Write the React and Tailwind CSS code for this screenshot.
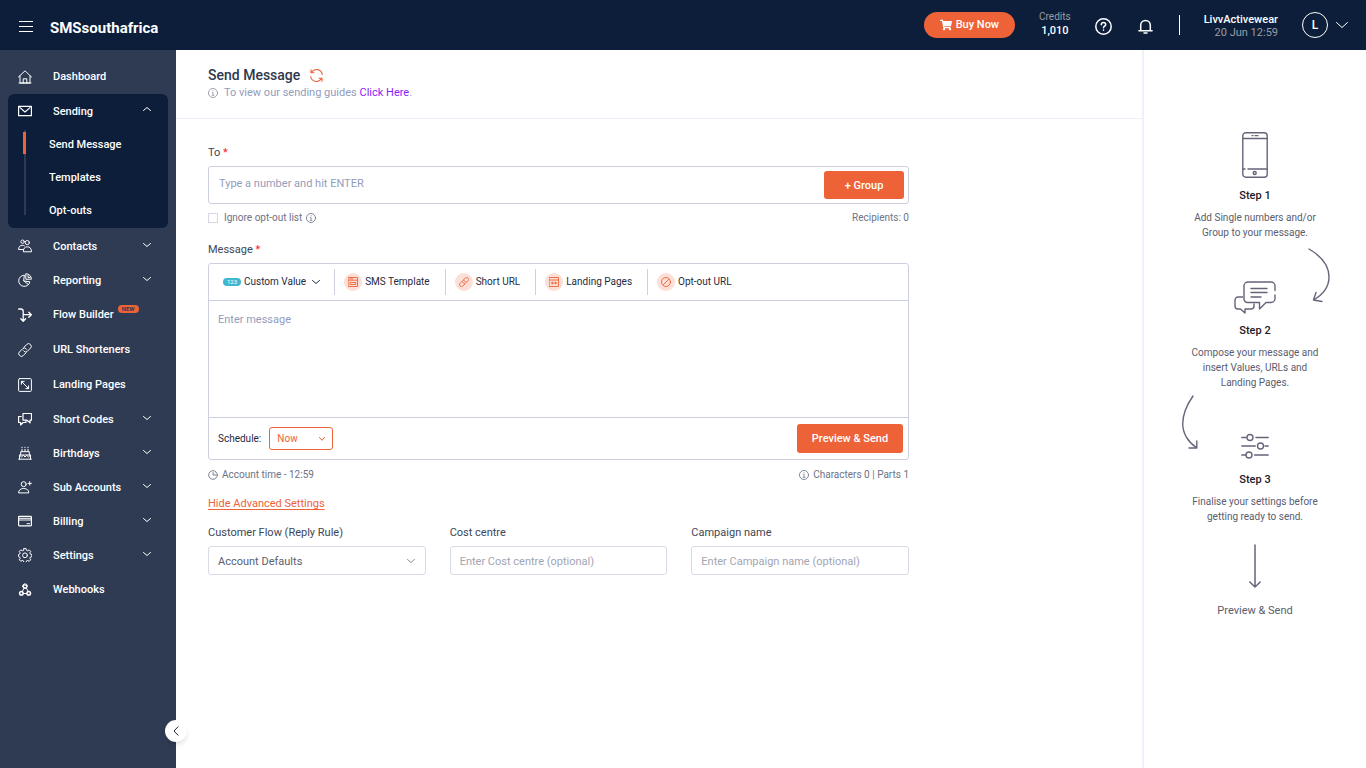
import React, { useState } from 'react';
import { FaShoppingCart } from 'react-icons/fa';

const Icon = ({ children, size = 'w-3.5 h-3.5', box = '0 0 14 14', stroke = 1 }) => (
  <svg
    className={`${size} shrink-0`}
    viewBox={box}
    fill="none"
    stroke="currentColor"
    strokeWidth={stroke}
    strokeLinecap="round"
    strokeLinejoin="round"
    aria-hidden="true"
  >
    {children}
  </svg>
);

const Chevron = ({ size = 'w-2 h-1', box = '0 0 8 4', d = 'M.5 .5 4 3.5 7.5 .5', stroke = 1 }) => (
  <Icon size={size} box={box} stroke={stroke}><path d={d} /></Icon>
);

const InfoIcon = () => (
  <Icon size="w-2.5 h-2.5" box="0 0 11 11" stroke={0.9}>
    <circle cx="5.5" cy="5.5" r="5" />
    <path d="M5.5 2.9v.3M4.7 5h.9v3M4.500 8h2.100" strokeWidth=".8" />
  </Icon>
);

const linkPaths = (
  <>
    <path d="M6 4.2 8.9 1.3a2.3 2.3 0 0 1 3.3 0l.4.4a2.3 2.3 0 0 1 0 3.3L9.3 8.3a2.3 2.3 0 0 1-3.3 0l-.5-.6" />
    <path d="M8 9.8l-2.9 2.9a2.3 2.3 0 0 1-3.3 0l-.4-.4a2.3 2.3 0 0 1 0-3.3l3.3-3.3a2.3 2.3 0 0 1 3.3 0l.5.6" />
  </>
);

const icons = {
  home: (
    <>
      <path d="M.5 7 7 .8 13.500 7M2 6v7h10V6M1 13h12" />
      <path d="M5.200 13V8.800h3.600V13" />
    </>
  ),
  mail: (
    <>
      <rect x=".6" y="2.300" width="12.800" height="9.400" strokeWidth="1.200" />
      <path d="M2 3.600 7 8l5-4.400" strokeWidth="1.200" />
    </>
  ),
  contacts: (
    <>
      <circle cx="4.600" cy="2.700" r="1.700" />
      <circle cx="9.300" cy="3.600" r="2.100" />
      <path d="M5.300 12.400c0-2.800 1.400-4.600 4-4.600s4.200 1.800 4.200 4.600zM5.300 10.500H.6c0-2.700 1.400-4.200 3.700-4.200.9 0 1.500.2 2.100.6" />
    </>
  ),
  chart: (
    <>
      <path d="M6 2.200a5.600 5.600 0 1 0 5.800 6.600L6 8z" />
      <path d="M8.200.7a5.300 5.300 0 0 1 5.200 5.500l-5.200.1zM6 8l4.500 3.600M10 2.500v2h2" />
    </>
  ),
  flow: (
    <path d="M.6 1h2.200c1.700 0 2.400.9 2.400 2.500v9.500M2.800 10.700l2.400 2.500 2.400-2.500M5.200 6.700h8M10.800 4.200l2.500 2.500-2.500 2.500" strokeWidth="1.300" />
  ),
  link: linkPaths,
  landing: (
    <>
      <rect x=".6" y=".6" width="12.800" height="12.800" rx="1" />
      <path d="M3.400 3.400l7.200 7.200M3.400 6.200V3.400h2.800M7.800 10.600h2.800V7.800" />
    </>
  ),
  codes: (
    <>
      <path d="M5 1.500h8.500v6.700H12v2.700L9 8.200H5z" strokeWidth="1.200" />
      <path d="M3.200 4.500H.6v6h2V13l2.500-2.500h2.800V8.600" strokeWidth="1.200" />
    </>
  ),
  cake: (
    <>
      <path d="M.6 13.200h12.800M1.500 13V9h11v4M2.700 9V5.700h8.600V9M4 5.500V3.300M7 5.500V3.300M10 5.500V3.300M4 1.200v.4M7 1.200v.4M10 1.200v.4" />
      <path d="M1.500 9.200l2 1.800L5.300 9.300 7 11l1.700-1.700 1.800 1.700 2-1.800" />
    </>
  ),
  userPlus: (
    <>
      <circle cx="5.700" cy="4.200" r="2.500" />
      <path d="M.6 12.500c0-2.400 2-4 5.100-4s5.100 1.600 5.100 4zM11.700 1.700v3.400M10 3.400h3.400" />
    </>
  ),
  card: (
    <>
      <rect x=".6" y="2.300" width="12.800" height="9.600" rx=".8" strokeWidth="1.200" />
      <path d="M.6 4.300h12.800M.6 6h12.800M9 9.700h2.600" />
    </>
  ),
  gear: (
    <>
      <path d="M5.900.6h2.200l.4 1.700 1.200.5 1.500-.9 1.500 1.500-.9 1.500.5 1.200 1.600.4v2.200l-1.600.4-.5 1.200.9 1.500-1.500 1.500-1.500-.9-1.200.5-.4 1.600H5.900l-.4-1.600-1.200-.5-1.500.9-1.500-1.500.9-1.500-.5-1.200L.6 8.700V6.500l1.100-.4.5-1.200-.9-1.500 1.500-1.500 1.500.9 1.200-.5z" />
      <circle cx="7" cy="7.300" r="2.400" />
    </>
  ),
  webhook: (
    <>
      <circle cx="7" cy="3.600" r="1.800" strokeWidth="1.300" />
      <circle cx="3.400" cy="10.200" r="1.800" strokeWidth="1.500" />
      <circle cx="10.700" cy="10.200" r="1.800" strokeWidth="1.500" />
      <path d="M6.500 4.500 4 9M8 4.500l2.400 4.200M5 10.500h4M4.500 3.500C4.500 1.800 5.600.9 7 .9s2.500.9 2.500 2.400" />
    </>
  ),
};

const menu = [
  { label: 'Contacts', icon: 'contacts', open: false },
  { label: 'Reporting', icon: 'chart', open: false },
  { label: 'Flow Builder', icon: 'flow', badge: 'NEW' },
  { label: 'URL Shorteners', icon: 'link' },
  { label: 'Landing Pages', icon: 'landing' },
  { label: 'Short Codes', icon: 'codes', open: false },
  { label: 'Birthdays', icon: 'cake', open: false },
  { label: 'Sub Accounts', icon: 'userPlus', open: false },
  { label: 'Billing', icon: 'card', open: false },
  { label: 'Settings', icon: 'gear', open: false },
  { label: 'Webhooks', icon: 'webhook' },
];

const Header = () => (
  <header className="flex h-[50px] shrink-0 items-center bg-[#0c1e3a] pl-[19px] pr-[18px] text-white">
    <button type="button" aria-label="Toggle menu" className="mt-1">
      <Icon size="w-3.5 h-3" box="0 0 14 12"><path d="M0 .5h14M0 5.500h14M0 10.500h14" strokeLinecap="butt" /></Icon>
    </button>
    <a href="#home" className="ml-[17px] mt-1.5 text-[15px] leading-6 font-bold">SMSsouthafrica</a>

    <div className="ml-auto flex items-center">
      <button type="button" className="flex h-[26px] items-center gap-1 rounded-full bg-[#ee6238] px-4 text-[11px] font-medium">
        <FaShoppingCart className="h-3 w-3" aria-hidden="true" />
        Buy Now
      </button>
      <div className="ml-6 pb-0.5 text-center text-[10px] leading-[14px] text-[#9a9da5]">
        Credits
        <div className="text-[11px] font-medium text-white">1,010</div>
      </div>
      <button type="button" aria-label="Help" className="ml-6 mt-0.5">
        <Icon size="w-[17px] h-[17px]" box="0 0 17 17" stroke={1.5}>
          <circle cx="8.500" cy="8.500" r="7.700" />
          <path d="M6.300 6.700c0-1.400 1-2.200 2.200-2.200s2.200.8 2.200 2c0 1.600-2.200 1.600-2.200 3.300M8.500 12.100v.2" />
        </Icon>
      </button>
      <button type="button" aria-label="Notifications" className="ml-[26px] mt-0.5">
        <Icon size="w-[15px] h-[15px]" box="0 0 15 15" stroke={1.5}>
          <path d="M.9 11.700h13.200M2.700 11.500V6.200a4.800 4.800 0 0 1 9.600 0v5.300M6 14h3" />
        </Icon>
      </button>
      <div className="ml-[26px] h-5 w-px bg-white"></div>
      <div className="ml-6 pt-0.5 text-right text-[11px] leading-[13px] font-medium">
        LivvActivewear
        <div className="font-normal text-[#9a9da5]">20 Jun 12:59</div>
      </div>
      <button type="button" aria-label="Account" className="ml-6 flex items-center gap-2">
        <span className="flex h-[26px] w-[26px] items-center justify-center rounded-full border border-white text-[12px] font-medium">L</span>
        <Chevron size="w-3 h-1.5" box="0 0 12 6" d="M.5 .5 6 5.500 11.500 .5" />
      </button>
    </div>
  </header>
);

const Sidebar = () => (
  <aside className="relative w-44 shrink-0 bg-[#2f3b53] px-2 pt-[9px] text-[11px] font-medium text-white">
    <nav>
      <a href="#dashboard" className="flex h-[35px] items-center gap-[21px] pl-2.5">
        <Icon>{icons.home}</Icon>
        <span className="pt-0.5">Dashboard</span>
      </a>
      <div className="mb-px rounded-md bg-[#0c1e3a] pb-px">
        <button type="button" aria-expanded="true" className="flex h-[34px] w-full items-center gap-[21px] pl-2.5 pr-[17px]">
          <Icon>{icons.mail}</Icon>
          <span className="pt-0.5">Sending</span>
          <span className="mb-1 ml-auto"><Chevron d="M.5 3.500 4 .5 7.500 3.500" /></span>
        </button>
        <div className="flex pl-4">
          <div className="relative mt-0.5 mb-3 w-0.5 bg-[#2f3b53]">
            <div className="absolute -left-px top-0.5 h-[22px] w-[3px] bg-[#ee6238]"></div>
          </div>
          <ul className="pl-[23px]">
            {['Send Message', 'Templates', 'Opt-outs'].map((item) => (
              <li key={item}>
                <a href="#sending" className="flex h-[33px] items-center pt-0.5">{item}</a>
              </li>
            ))}
          </ul>
        </div>
      </div>
      {menu.map((item) =>
        item.open === undefined ? (
          <a key={item.label} href="#page" className="flex h-[35px] items-center gap-[21px] pl-2.5">
            <Icon>{icons[item.icon]}</Icon>
            <span className="flex gap-1">
              <span className="pt-0.5">{item.label}</span>
              {item.badge && (
                <span className="h-2 rounded-full bg-[#ee6238] px-1 text-[6px] leading-2 font-bold text-[#2f3b53]">{item.badge}</span>
              )}
            </span>
          </a>
        ) : (
          <button key={item.label} type="button" aria-expanded={item.open} className="flex h-[34px] w-full items-center gap-[21px] pl-2.5 pr-[17px]">
            <Icon>{icons[item.icon]}</Icon>
            <span className="pt-0.5">{item.label}</span>
            <span className="mb-0.5 ml-auto"><Chevron /></span>
          </button>
        )
      )}
    </nav>
    <button
      type="button"
      aria-label="Collapse sidebar"
      className="absolute -right-[11px] bottom-[26px] flex h-[22px] w-[22px] items-center justify-center rounded-full bg-white text-[#1b2233] shadow-md"
    >
      <Icon size="w-1.5 h-2.5" box="0 0 6 10"><path d="M5 .8 1 5l4 4.200" /></Icon>
    </button>
  </aside>
);

const toolIcons = {
  template: (
    <>
      <rect x=".5" y=".5" width="9" height="9" />
      <path d="M.5 3.200h9M1.800 1.900h3M2.300 5.500h5.400v2H2.300z" />
    </>
  ),
  link: <g transform="scale(.72)" strokeWidth="1.300">{linkPaths}</g>,
  landing: (
    <>
      <rect x=".5" y=".5" width="9" height="9" />
      <path d="M.5 3h9M2.200 6h5.600M3.300 5v2M6.700 5v2" />
    </>
  ),
  block: (
    <>
      <circle cx="5" cy="5" r="4.500" />
      <path d="M2.500 7.500l5-5" />
    </>
  ),
};

const tools = [
  { label: 'SMS Template', icon: 'template' },
  { label: 'Short URL', icon: 'link' },
  { label: 'Landing Pages', icon: 'landing' },
  { label: 'Opt-out URL', icon: 'block' },
];

const MessageForm = () => {
  const [ignoreOptOut, setIgnoreOptOut] = useState(false);

  return (
    <form className="w-full max-w-[765px] px-8 pt-[26px] text-[11px] leading-4 text-[#3d4657]" onSubmit={(e) => e.preventDefault()}>
      {/* Recipients */}
      <label htmlFor="to" className="block">To <span className="text-[#f5222d]">*</span></label>
      <div className="mt-[5px] flex h-[38px] rounded-[3px] border border-[#cdd0de] p-1">
        <input id="to" type="text" placeholder="Type a number and hit ENTER" className="mb-0.5 min-w-0 flex-1 pl-1.5 outline-none placeholder:text-[#939cbc]" />
        <button type="button" className="w-20 rounded-[3px] bg-[#ee6238] pt-0.5 font-medium text-white">+ Group</button>
      </div>
      <div className="mt-1.5 flex items-center text-[10px] text-[#6d7386]">
        <input
          id="ignore"
          type="checkbox"
          checked={ignoreOptOut}
          onChange={(e) => setIgnoreOptOut(e.target.checked)}
          className="h-2.5 w-2.5 appearance-none border border-[#d5d6e6] checked:bg-[#ee6238]"
        />
        <label htmlFor="ignore" className="ml-1.5 mr-1">Ignore opt-out list</label>
        <InfoIcon />
        <span className="ml-auto">Recipients: 0</span>
      </div>

      {/* Message editor */}
      <label htmlFor="message" className="mt-4 block">Message <span className="text-[#f5222d]">*</span></label>
      <div className="mt-[5px] rounded-[3px] border border-[#cdd0de]">
        <div className="flex h-[37px] items-center border-b border-[#cdd0de] pl-3.5 text-[10px] text-[#1f2a40]">
          <button type="button" className="flex items-center gap-[3px] pr-3.5">
            <span className="h-2 w-[18px] rounded-full bg-[#3fb8cf] text-center text-[6px] leading-2 text-white">123</span>
            Custom Value
            <span className="ml-[3px]"><Chevron /></span>
          </button>
          {tools.map((tool) => (
            <button key={tool.label} type="button" className="flex h-[26px] items-center gap-[3px] border-l border-[#cdd0de] pl-[9px] pr-[15px]">
              <span className="flex h-[18px] w-[18px] items-center justify-center rounded-full bg-[#fcdfd7] text-[#ee6238]">
                <Icon size="w-2.5 h-2.5" box="0 0 10 10" stroke={0.9}>{toolIcons[tool.icon]}</Icon>
              </span>
              {tool.label}
            </button>
          ))}
        </div>
        <textarea id="message" placeholder="Enter message" className="block h-[116px] w-full resize-none px-[9px] py-[11px] outline-none placeholder:text-[#939cbc]"></textarea>
        <div className="flex h-[42px] items-center border-t border-[#cdd0de] pl-[9px] pr-[5px]">
          <label htmlFor="schedule" className="text-[10px] text-[#1f2a40]">Schedule:</label>
          <div className="relative ml-2 text-[#ee6238]">
            <select id="schedule" className="block h-[23px] w-16 appearance-none rounded-[3px] border border-[#ee6238] pl-[7px] text-[10px]">
              <option>Now</option>
            </select>
            <span className="pointer-events-none absolute inset-y-0 right-2 flex items-center"><Chevron size="w-1.5 h-1" box="0 0 6 4" d="M.5 .5 3 3.300 5.500 .5" /></span>
          </div>
          <button type="submit" className="ml-auto h-[29px] w-[106px] rounded-[3px] bg-[#ee6238] font-medium text-white">Preview &amp; Send</button>
        </div>
      </div>
      <div className="mt-[7px] flex items-center gap-1 text-[10px] text-[#6d7386]">
        <Icon size="w-2.5 h-2.5" box="0 0 10 10" stroke={0.9}><circle cx="5" cy="5" r="4.300" /><path d="M5 2.500V5h3" /></Icon>
        Account time - 12:59
        <span className="ml-auto flex items-center gap-1"><InfoIcon /> Characters 0 | Parts 1</span>
      </div>

      <button type="button" className="mt-[13px] block text-[#ee6238] underline underline-offset-2">Hide Advanced Settings</button>

      <div className="mt-[13px] grid grid-cols-3 gap-6">
        <div>
          <label htmlFor="flow" className="block">Customer Flow (Reply Rule)</label>
          <div className="relative mt-[5px]">
            <select id="flow" className="block h-[29px] w-full appearance-none rounded-[3px] border border-[#d9dae8] px-[9px] pt-0.5 text-[#5c6070]">
              <option>Account Defaults</option>
            </select>
            <span className="pointer-events-none absolute inset-y-0 right-[11px] flex items-center text-[#8c8f9c]"><Chevron size="w-2 h-1" /></span>
          </div>
        </div>
        <div>
          <label htmlFor="cost" className="block">Cost centre</label>
          <input id="cost" type="text" placeholder="Enter Cost centre (optional)" className="mt-[5px] block h-[29px] w-full rounded-[3px] border border-[#d9dae8] px-[9px] pt-0.5 placeholder:text-[#a2a5b3]" />
        </div>
        <div>
          <label htmlFor="campaign" className="block">Campaign name</label>
          <input id="campaign" type="text" placeholder="Enter Campaign name (optional)" className="mt-[5px] block h-[29px] w-full rounded-[3px] border border-[#d9dae8] px-[9px] pt-0.5 placeholder:text-[#a2a5b3]" />
        </div>
      </div>
    </form>
  );
};

const Step = ({ title, children }) => (
  <>
    <h2 className="text-[11px] leading-4 font-medium text-[#1e2026]">{title}</h2>
    <p className="mt-1.5 text-[10px] leading-[15px]">{children}</p>
  </>
);

const Steps = () => (
  <aside className="w-56 shrink-0 border-l-2 border-[#f0f0fd] pt-[82px] text-center text-[#5a5d6e]">
    <div className="mb-2.5 flex justify-center text-[#67647a]">
      <Icon size="w-[26px] h-[46px]" box="0 0 26 46" stroke={1.4}>
        <rect x=".8" y=".8" width="24.400" height="44.400" rx="3" />
        <path d="M1 6.500h24M6 37h19M1 37h2M10 3.600h1M13 3.600h3" />
        <circle cx="12.700" cy="41" r="1.500" />
      </Icon>
    </div>
    <Step title="Step 1">Add Single numbers and/or<br />Group to your message.</Step>

    <div className="mt-2 mb-[9px] grid grid-cols-3 text-[#67647a]">
      <div className="col-start-2 flex items-end justify-center">
        <Icon size="w-[42px] h-[33px]" box="0 0 42 33" stroke={1.4}>
          <path d="M41 9.500V5a4 4 0 0 0-4-4H14a4 4 0 0 0-4 4v13a3.500 3.500 0 0 0 3.500 3.500H25.500v6.500l6.500-6.500h5a4 4 0 0 0 4-4v-3.500" />
          <path d="M17 7.500h16M17 11.500h16M17 16h10M8.500 16H4a3 3 0 0 0-3 3v6a3 3 0 0 0 3 3h2.500l4.500 4V28h6.500a3 3 0 0 0 2.500-3v-2" />
        </Icon>
      </div>
      <div className="flex h-[66px] pl-4">
        <Icon size="w-[22px] h-[55px]" box="0 0 22 55" stroke={1.4}>
          <path d="M1 1c12 7 20 17 20 28 0 9-5 17-15.500 23M8 44.500 5.500 52l8.500 1.500" />
        </Icon>
      </div>
    </div>
    <Step title="Step 2">Compose your message and<br />insert Values, URLs and<br />Landing Pages.</Step>

    <div className="mt-[5px] mb-[13px] grid grid-cols-3 text-[#67647a]">
      <div className="flex h-16 pl-[38px]">
        <Icon size="w-4 h-[54px]" box="0 0 16 54" stroke={1.4}>
          <path d="M11 1C4 11 .7 20 .7 29c0 9 5.300 18 13.600 23.500M14.800 46v7H7" />
        </Icon>
      </div>
      <div className="flex items-end justify-center">
        <Icon size="w-7 h-[26px]" box="0 0 28 26" stroke={1.4}>
          <path d="M.8 4.500h4.500M15 4.500h12.200M.8 13h13.500M24 13h3.200M.8 22h4M13.500 22h13.700" />
          <circle cx="9" cy="4.500" r="3" />
          <circle cx="19.500" cy="13" r="3" />
          <circle cx="8" cy="22" r="3" />
        </Icon>
      </div>
    </div>
    <Step title="Step 3">Finalise your settings before<br />getting ready to send.</Step>

    <div className="mt-5 mb-[15px] flex justify-center text-[#67647a]">
      <Icon size="w-3 h-11" box="0 0 12 44" stroke={1.5}><path d="M6 1v42M.8 38 6 43l5.200-5" /></Icon>
    </div>
    <p className="text-[11px] leading-4">Preview &amp; Send</p>
  </aside>
);

const App = () => (
  <div className="flex min-h-screen flex-col bg-white font-['Roboto',sans-serif]">
    <Header />
    <div className="flex flex-1">
      <Sidebar />
      <main className="min-w-0 flex-1">
        <div className="h-[69px] border-b border-[#f0f0fd] px-8 pt-4">
          <div className="flex items-center gap-2.5">
            <h1 className="text-[14px] leading-[18px] font-medium text-[#2e384d]">Send Message</h1>
            <button type="button" aria-label="Refresh" className="text-[#ee6238]">
              <Icon size="w-[13px] h-[13px]" box="0 0 13 13" stroke={1.1}>
                <path d="M.7 7.500a5.800 5.800 0 0 0 9.900 3.200l1.200-1.200M12.300 5.500A5.800 5.800 0 0 0 2.400 2.300L1.200 3.500M1 .8v3h3M12 12.200v-3H9" />
              </Icon>
            </button>
          </div>
          <p className="mt-px flex items-center text-[11px] leading-4 text-[#939cbc]">
            <span className="mr-1.5 text-[#8c8f9c]"><InfoIcon /></span>
            To view our sending guides&nbsp;<a href="#guides" className="text-[#8a1ff5]">Click Here</a>.
          </p>
        </div>
        <MessageForm />
      </main>
      <Steps />
    </div>
  </div>
);

export default App;
